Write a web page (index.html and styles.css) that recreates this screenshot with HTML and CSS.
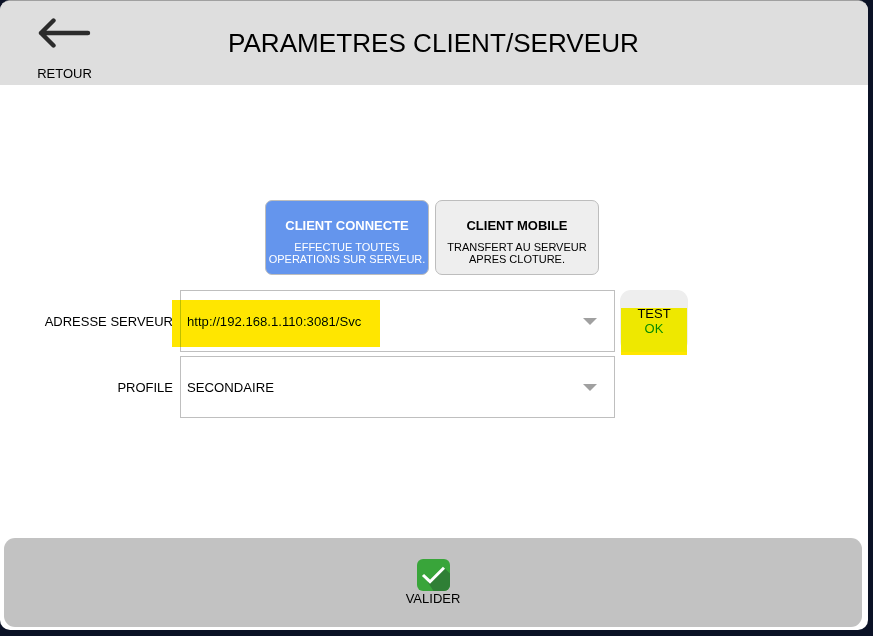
FILE: index.html
```html
<!DOCTYPE html>
<html lang="en">
<head>
    <meta charset="UTF-8">
    <meta name="viewport" content="width=device-width, initial-scale=1.0">
    <title>Parametres client/serveur</title>
    <link rel="stylesheet" href="styles.css">
</head>
<body>
    <div class="panel">
        <header class="top-bar">
            <button class="back">
                <svg class="back-icon" width="54" height="30" viewBox="0 0 54 30">
                    <path d="M50 15H3M15.500 2.500L3 15L15.500 27.500" fill="none" stroke="#2b2b2b" stroke-width="4.4" stroke-linecap="round" stroke-linejoin="round"/>
                </svg>
                <span>RETOUR</span>
            </button>
            <h1>PARAMETRES CLIENT/SERVEUR</h1>
        </header>

        <main class="content">
            <div class="modes">
                <div class="mode mode-active">
                    <strong>CLIENT CONNECTE</strong>
                    <span>EFFECTUE TOUTES<br>OPERATIONS SUR SERVEUR.</span>
                </div>
                <div class="mode">
                    <strong>CLIENT MOBILE</strong>
                    <span>TRANSFERT AU SERVEUR<br>APRES CLOTURE.</span>
                </div>
            </div>

            <div class="form-row">
                <label>ADRESSE SERVEUR</label>
                <div class="select">
                    <span>http://192.168.1.110:3081/Svc</span>
                    <i class="arrow"></i>
                </div>
                <button class="test">TEST<span class="test-ok">OK</span></button>
            </div>
            <div class="form-row">
                <label>PROFILE</label>
                <div class="select">
                    <span>SECONDAIRE</span>
                    <i class="arrow"></i>
                </div>
            </div>
        </main>

        <footer class="bottom">
            <button class="validate">
                <svg width="33" height="32" viewBox="0 0 33 32">
                    <rect width="33" height="32" rx="6" fill="#39a53a"/>
                    <path d="M10.700 23L16.500 32H27a6 6 0 0 0 6-6V14.500L27 8.700L13 22.700Z" fill="#2f7f35"/>
                    <path d="M6 16L13 22.700L27 8.700" fill="none" stroke="#fff" stroke-width="3"/>
                </svg>
                <span>VALIDER</span>
            </button>
        </footer>

        <div class="mark mark-url"></div>
        <div class="mark mark-test"></div>
    </div>
</body>
</html>
```

FILE: styles.css
```css
* {
    box-sizing: border-box;
}
body {
    margin: 0;
    height: 636px;
    overflow: hidden;
    background-color: #0b1226;
    font-family: "Liberation Sans", Arial, sans-serif;
    color: #000;
}
button {
    font: inherit;
    color: inherit;
    border: 0;
    padding: 0;
    background: none;
}
.panel {
    position: relative;
    width: 868px;
    height: 630px;
    background-color: #fff;
    border-top: 1px solid #a0a0a0;
    border-radius: 10px;
    display: flex;
    flex-direction: column;
    overflow: hidden;
}
.top-bar {
    height: 84px;
    flex: none;
    background-color: #dedede;
    display: flex;
}
.back {
    width: 129px;
    display: flex;
    flex-direction: column;
    align-items: center;
    font-size: 13px;
    padding-top: 17px;
}
.back-icon {
    margin-bottom: 18px;
    display: block;
}
.top-bar h1 {
    margin: 26px 0 0 99px;
    font-size: 26.1px;
    line-height: 32px;
    font-weight: normal;
}
.content {
    flex: 1;
    padding-top: 115px;
}
.modes {
    display: flex;
    justify-content: center;
    gap: 6px;
    margin-left: -4px;
    margin-bottom: 15px;
}
.mode {
    width: 164px;
    height: 75px;
    border: 1px solid #bdbdbd;
    border-radius: 7px;
    background-color: #eee;
    display: flex;
    flex-direction: column;
    align-items: center;
    text-align: center;
    padding-top: 16px;
}
.mode strong {
    font-size: 13px;
    line-height: 17px;
    margin-bottom: 7px;
}
.mode span {
    font-size: 11px;
    line-height: 12px;
}
.mode-active {
    background-color: #6495ed;
    color: #fff;
}
.form-row {
    display: flex;
    align-items: flex-start;
    margin-bottom: 4px;
}
.form-row label {
    width: 173px;
    height: 62px;
    line-height: 64px;
    text-align: right;
    font-size: 13px;
}
.select {
    width: 435px;
    height: 62px;
    margin-left: 7px;
    border: 1px solid #bfbfbf;
    display: flex;
    align-items: center;
    justify-content: space-between;
    padding: 0 17px 0 6px;
    font-size: 13.15px;
}
.arrow {
    width: 0;
    height: 0;
    border-left: 7.5px solid transparent;
    border-right: 7.5px solid transparent;
    border-top: 7px solid #a0a0a0;
}
.test {
    width: 68px;
    height: 62px;
    margin-left: 5px;
    border-radius: 11px;
    background-color: #eee;
    font-size: 13px;
    line-height: 15px;
    padding-top: 16px;
    display: flex;
    flex-direction: column;
    align-items: center;
}
.test-ok {
    color: #0a8a0a;
}
.bottom {
    flex: none;
    padding: 0 6px 3px 4px;
}
.validate {
    width: 100%;
    height: 89px;
    border-radius: 11px;
    background-color: #c2c2c2;
    display: flex;
    flex-direction: column;
    align-items: center;
    padding-top: 21px;
    font-size: 13px;
    line-height: 16px;
}
.validate svg {
    display: block;
}
/* hand drawn highlights on top of the screenshot */
.mark {
    position: absolute;
    mix-blend-mode: darken;
}
.mark-url {
    left: 172px;
    top: 299px;
    width: 208px;
    height: 47px;
    background-color: #ffe600;
}
.mark-test {
    left: 621px;
    top: 307px;
    width: 66px;
    height: 47px;
    background: linear-gradient(#f0e800 44px, #ffe600 44px);
}
```
